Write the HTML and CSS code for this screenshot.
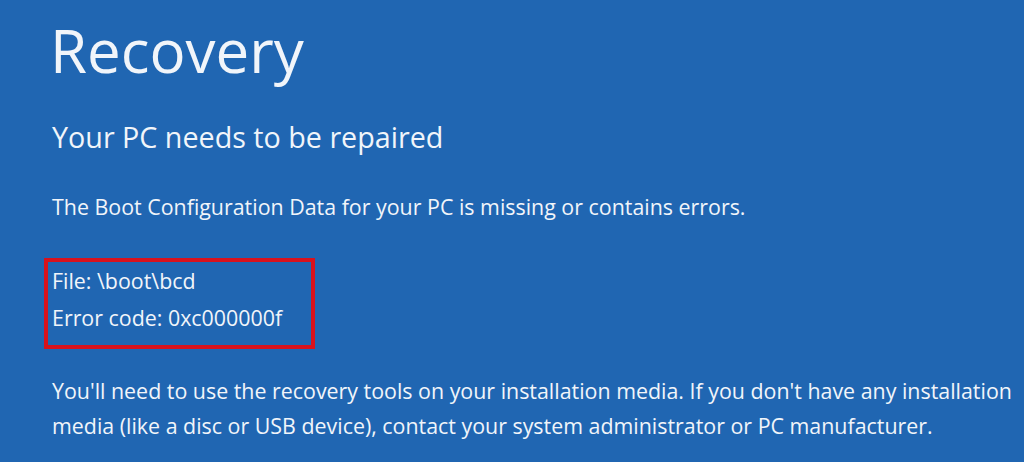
FILE: index.html
```html
<!DOCTYPE html>
<html lang="en">
<head>
<meta charset="utf-8">
<title>Recovery</title>
<link rel="stylesheet" href="styles.css">
</head>
<body>
<main class="screen">
  <h1 class="title">Recovery</h1>
  <h2 class="subtitle">Your PC needs to be repaired</h2>
  <p class="text intro">The Boot Configuration Data for your PC is missing or contains errors.</p>
  <div class="errbox">
    <p class="text line">File: \boot\bcd</p>
    <p class="text line">Error code: 0xc000000f</p>
  </div>
  <p class="text para">You'll need to use the recovery tools on your installation media. If you don't have any installation media (like a disc or USB device), contact your system administrator or PC manufacturer.</p>
</main>
</body>
</html>
```
FILE: styles.css
```css
html, body {
  margin: 0;
  padding: 0;
  background: #2066b2;
}
.screen {
  width: 1024px;
  height: 462px;
  overflow: hidden;
  box-sizing: border-box;
  padding: 10px 0 0 50px;
  color: #f1f5fa;
  font-family: "Open Sans", "Noto Sans", sans-serif;
}
.title {
  margin: 0;
  font-size: 60px;
  font-weight: 400;
  line-height: 80px;
}
.subtitle {
  margin: 27px 0 0 2px;
  font-size: 28.7px;
  font-weight: 400;
  line-height: 40px;
}
.text {
  margin: 0;
  font-size: 21.4px;
  line-height: 30px;
}
.intro {
  margin: 35px 0 0 2px;
}
.errbox {
  margin: 36px 0 0 -6px;
  width: 259px;
  padding: 0 0 9px 4px;
  border: 4px solid #d8121d;
}
.line {
  line-height: 37px;
}
.para {
  margin: 24px 0 0 2px;
  font-size: 21.4px;
  line-height: 35px;
  width: 980px;
}
```
